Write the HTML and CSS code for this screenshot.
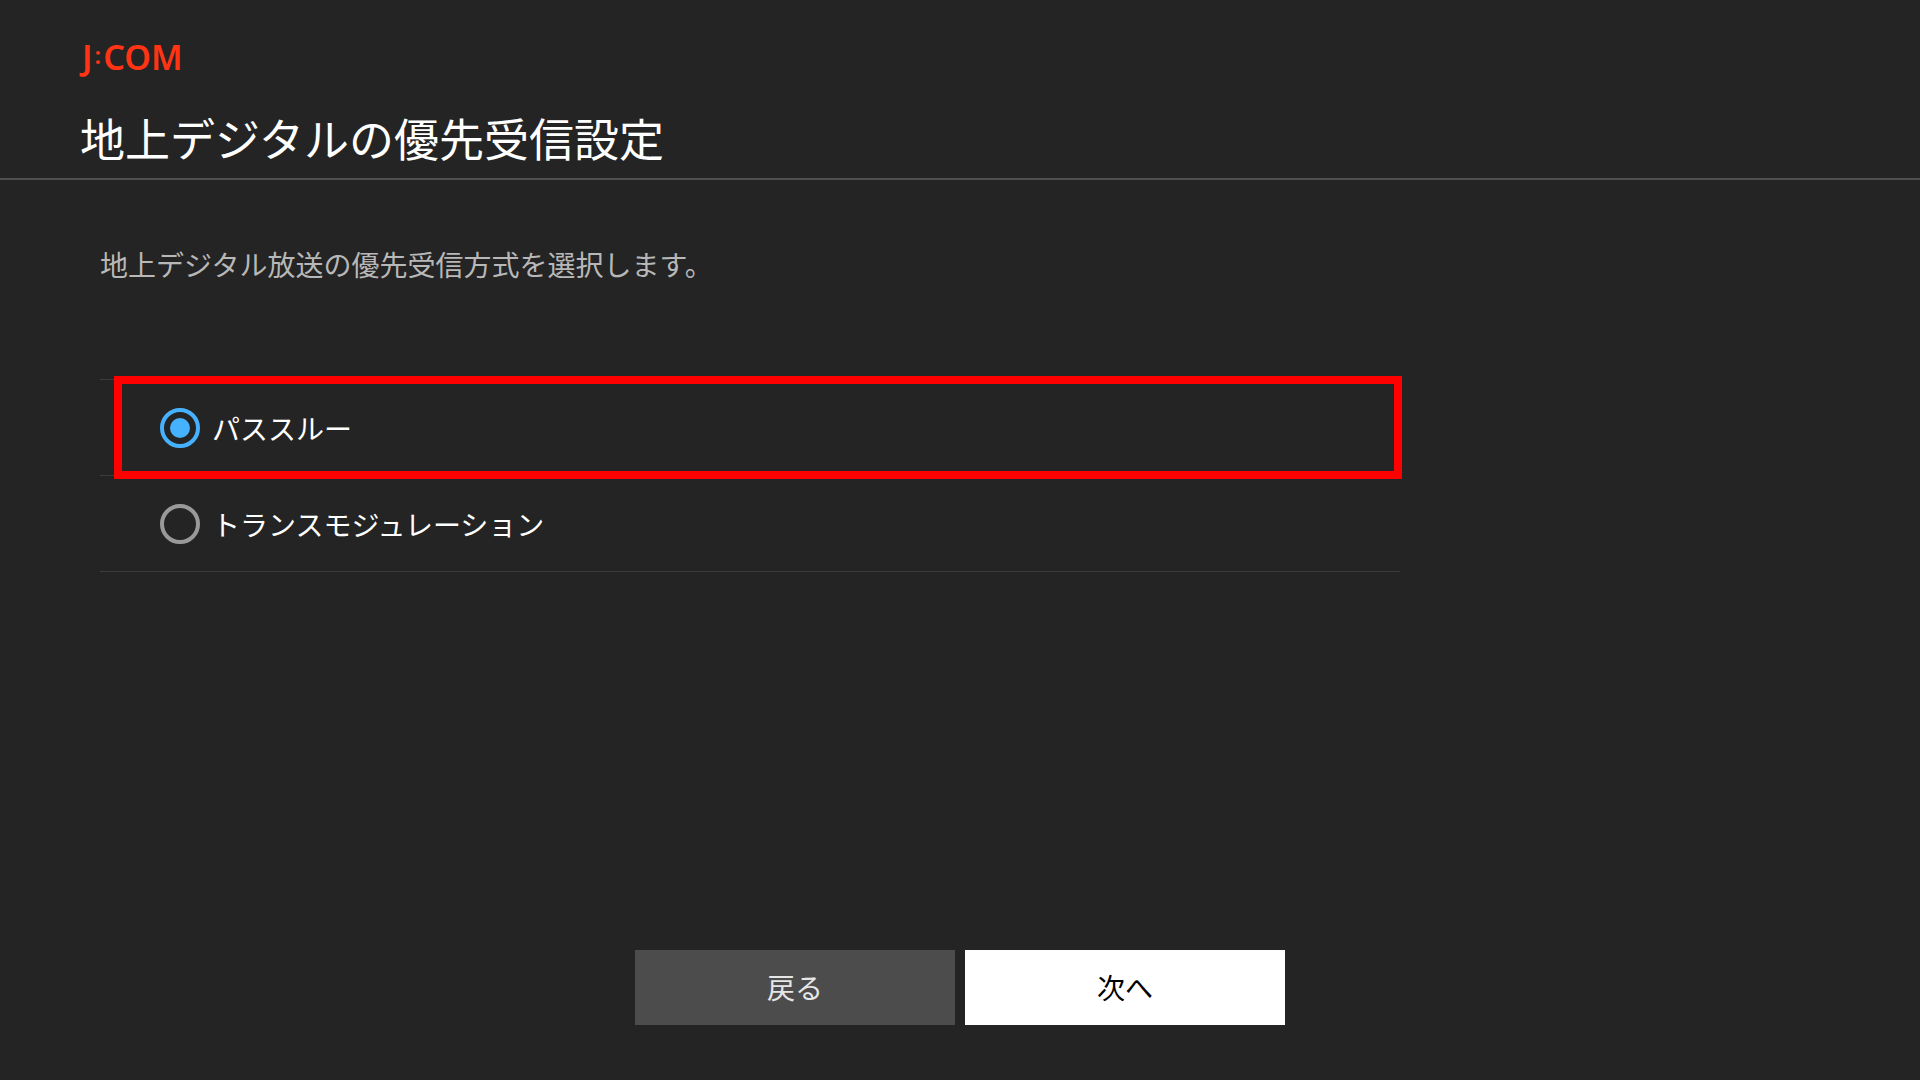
FILE: index.html
```html
<!DOCTYPE html>
<html lang="ja">
<head>
  <meta charset="utf-8">
  <meta name="viewport" content="width=device-width, initial-scale=1">
  <title>地上デジタルの優先受信設定</title>
  <link rel="stylesheet" href="styles.css">
</head>
<body>
  <header class="header">
    <div class="logo">J<span class="logo-colon">:</span>COM</div>
    <h1 class="title">地上デジタルの優先受信設定</h1>
  </header>
  <form class="form">
    <main class="content">
      <p class="lead" id="lead">地上デジタル放送の優先受信方式を選択します。</p>
      <div class="options" role="radiogroup" aria-labelledby="lead">
        <label class="option option-focused">
          <input class="radio" type="radio" name="reception" value="pass-through" checked>
          <span>パススルー</span>
        </label>
        <label class="option">
          <input class="radio" type="radio" name="reception" value="trans-modulation">
          <span>トランスモジュレーション</span>
        </label>
      </div>
    </main>
    <footer class="actions">
      <button class="button" type="button">戻る</button>
      <button class="button button-primary" type="submit">次へ</button>
    </footer>
  </form>
</body>
</html>
```

FILE: styles.css
```css
* {
  box-sizing: border-box;
}

body {
  display: flex;
  flex-direction: column;
  min-height: 100vh;
  margin: 0;
  background: #242424;
  color: #fff;
  font-family: "Noto Sans CJK JP", sans-serif;
  font-size: 28px;
  line-height: 40px;
}

.header {
  padding: 37px 80px 8px;
  border-bottom: 2px solid #4f4f4f;
}

.logo {
  padding-left: 2px;
  color: #ff3414;
  font-family: "Noto Sans", sans-serif;
  font-size: 34px;
  font-weight: 600;
  line-height: 40px;
}

.logo-colon {
  margin: 0 2px;
  font-size: 24px;
  line-height: 1;
  vertical-align: 6px;
}

.title {
  margin: 29px 0 0;
  font-size: 45px;
  font-weight: 400;
  line-height: 64px;
}

.form {
  display: flex;
  flex: 1;
  flex-direction: column;
}

.content {
  flex: 1;
  padding: 64px 100px;
}

.lead {
  margin: 0 0 95px;
  color: #b8b8b8;
}

.options {
  max-width: 1300px;
  border-top: 1px solid #3c3c3c;
}

.option {
  position: relative;
  display: flex;
  align-items: center;
  gap: 12px;
  height: 96px;
  padding-left: 60px;
  border-bottom: 1px solid #3c3c3c;
}

.option-focused::after {
  position: absolute;
  inset: -4px -2px -4px 14px;
  border: 8px solid #f00;
  content: "";
}

.radio {
  display: grid;
  place-items: center;
  width: 40px;
  height: 40px;
  margin: 0;
  border: 4px solid #999;
  border-radius: 50%;
  appearance: none;
}

.radio:checked {
  border-color: #46b2ff;
}

.radio:checked::before {
  width: 20px;
  height: 20px;
  border-radius: 50%;
  background: #46b2ff;
  content: "";
}

.actions {
  display: flex;
  justify-content: center;
  gap: 10px;
  padding-bottom: 55px;
}

.button {
  width: 320px;
  height: 75px;
  padding: 0 0 2px;
  border: 0;
  background: #4c4c4c;
  color: #e6e6e6;
  font: inherit;
}

.button-primary {
  background: #fff;
  color: #000;
}
```
